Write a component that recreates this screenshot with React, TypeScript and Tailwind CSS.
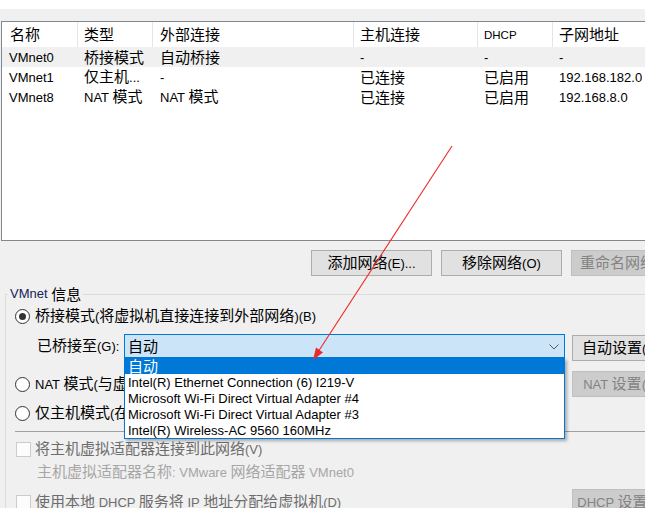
import React from "react";

const CJK_RE = /([\u2E80-\u9FFF\u3000-\u303F\uFF00-\uFFEF]+)/;

function M({ s }: { s: string }) {
  return (
    <span className="whitespace-pre">
      {s.split(CJK_RE).map((p, i) =>
        !p ? null : i % 2 === 1 ? (
          <span key={i} className="font-['Noto_Sans_CJK_SC',sans-serif] text-[15px]">
            {p}
          </span>
        ) : (
          <span key={i} className="text-[13px]">
            {p}
          </span>
        )
      )}
    </span>
  );
}

function Btn({ label, disabled, w }: { label: string; disabled?: boolean; w: string }) {
  const base = "h-[26px] shrink-0 flex items-center justify-center border whitespace-nowrap leading-[18px] ";
  const look = disabled
    ? "bg-[#cccccc] border-[#bfbfbf] text-[#838383]"
    : "bg-[#e1e1e1] border-[#adadad] text-black";
  return (
    <div className={base + look + " " + w}>
      <M s={label} />
    </div>
  );
}

function Radio({ checked }: { checked?: boolean }) {
  return (
    <div className="w-[15px] h-[15px] shrink-0 rounded-full border border-[#333333] bg-white flex items-center justify-center">
      {checked ? <div className="w-[7px] h-[7px] rounded-full bg-[#333333]" /> : null}
    </div>
  );
}

function Check() {
  return <div className="w-[15px] h-[15px] shrink-0 border border-[#cccccc] bg-[#fcfcfc]" />;
}

const cols = [
  "w-[76px] pl-[8px]",
  "w-[75px] pl-[6px]",
  "w-[201px] pl-[7px]",
  "w-[124px] pl-[6px]",
  "w-[75px] pl-[6px]",
  "w-[160px] pl-[6px]",
];

const rows = [
  ["VMnet0", "桥接模式", "自动桥接", "-", "-", "-"],
  ["VMnet1", "仅主机...", "-", "已连接", "已启用", "192.168.182.0"],
  ["VMnet8", "NAT 模式", "NAT 模式", "已连接", "已启用", "192.168.8.0"],
];

const items = [
  "自动",
  "Intel(R) Ethernet Connection (6) I219-V",
  "Microsoft Wi-Fi Direct Virtual Adapter #4",
  "Microsoft Wi-Fi Direct Virtual Adapter #3",
  "Intel(R) Wireless-AC 9560 160MHz",
];

export default function App() {
  return (
    <div className="relative w-[645px] h-[508px] overflow-hidden bg-[#f0f0f0] text-black font-['Liberation_Sans','Noto_Sans_CJK_SC',sans-serif] leading-[18px]">
      <div className="h-[9px] bg-white" />

      {/* list view */}
      <div className="mt-[12px] ml-[1px] w-[720px] h-[220px] border border-[#828790] bg-white">
        <div className="flex h-[25px]">
          {["名称", "类型", "外部连接", "主机连接", "DHCP", "子网地址"].map((h, i) => (
            <div
              key={i}
              className={
                "h-full flex items-center whitespace-nowrap border-r border-[#e5e5e5] " + cols[i]
              }
            >
              {h === "DHCP" ? <span className="text-[11.5px]">DHCP</span> : <M s={h} />}
            </div>
          ))}
        </div>
        {rows.map((r, ri) => (
          <div key={ri} className={"flex h-[20px] " + (ri === 0 ? "bg-[#f0f0f0]" : "")}>
            {r.map((c, ci) => (
              <div
                key={ci}
                className={
                  "h-full flex items-center whitespace-nowrap border-r border-transparent " +
                  cols[ci] +
                  (ci === 0 ? " !pl-[7px]" : "")
                }
              >
                <M s={c} />
              </div>
            ))}
          </div>
        ))}
      </div>

      {/* buttons */}
      <div className="mt-[9px] ml-[311px] flex gap-[9px]">
        <Btn label="添加网络(E)..." w="w-[121px]" />
        <Btn label="移除网络(O)" w="w-[121px]" />
        <Btn label="重命名网络(A)..." w="w-[121px]" disabled />
      </div>

      {/* group box */}
      <fieldset className="mt-[8px] ml-[5px] w-[700px] border border-[#dcdcdc] p-0 m-0 h-[300px]">
        <legend className="ml-[2px] px-[2px] h-[20px] flex items-center whitespace-pre">
          <span className="text-[13px] text-[#14235a]">VMnet </span>
          <span className="font-['Noto_Sans_CJK_SC',sans-serif] text-[15px]">信息</span>
        </legend>
        <div className="pl-[9px]">
          {/* radio 1 */}
          <div className="mt-[2px] h-[20px] flex items-center gap-[5px] whitespace-nowrap">
            <Radio checked />
            <M s="桥接模式(将虚拟机直接连接到外部网络)(B)" />
          </div>

          {/* bridged to */}
          <div className="mt-[8px] flex items-start">
            <div className="w-[557px] flex items-start">
              <div className="w-[109px] pl-[22px] h-[24px] flex items-center whitespace-nowrap">
                <M s="已桥接至(G):" />
              </div>
              <div className="relative w-[441px] h-[24px]">
                <div className="w-full h-full border border-[#0078d7] bg-[#cce4f7] flex items-center pl-[3px] pr-[5px]">
                  <div className="flex-1">
                    <M s="自动" />
                  </div>
                  <svg width="10" height="6" viewBox="0 0 10 6" className="mt-[1px]">
                    <polyline points="0.5,0.5 5,5 9.5,0.5" fill="none" stroke="#5a5a5a" strokeWidth="1" />
                  </svg>
                </div>
                <div className="absolute left-0 top-full z-10 w-full border-x border-b border-[#0078d7] bg-white shadow-[2px_2px_3px_rgba(0,0,0,0.3)]">
                  {items.map((it, i) => (
                    <div
                      key={i}
                      className={
                        "h-[16px] flex items-center pl-[3px] whitespace-nowrap " +
                        (i === 0 ? "bg-[#0078d7] text-white" : "text-black")
                      }
                    >
                      <M s={it} />
                    </div>
                  ))}
                </div>
              </div>
            </div>
            <div className="mt-[1px]">
              <Btn label="自动设置(U)..." w="w-[109px]" />
            </div>
          </div>

          {/* radio 2 */}
          <div className="mt-[10px] flex items-center h-[26px]">
            <div className="w-[557px] flex items-center gap-[5px] whitespace-nowrap">
              <Radio />
              <M s="NAT 模式(与虚拟机共享主机的 IP 地址)(N)" />
            </div>
            <Btn label="NAT 设置(S)..." w="w-[109px]" disabled />
          </div>

          {/* radio 3 */}
          <div className="mt-[6px] h-[20px] flex items-center gap-[5px] whitespace-nowrap">
            <Radio />
            <M s="仅主机模式(在专用网络内连接虚拟机)(H)" />
          </div>

          <div className="mt-[8px] h-px bg-[#a0a0a0]" />

          {/* checkbox 1 */}
          <div className="mt-[7px] h-[20px] flex items-center gap-[4px] whitespace-nowrap pl-[1px] text-[#6d6d6d]">
            <Check />
            <M s="将主机虚拟适配器连接到此网络(V)" />
          </div>

          <div className="mt-[3px] h-[20px] flex items-center pl-[22px] whitespace-nowrap text-[#a6a6a6]">
            <M s="主机虚拟适配器名称: VMware 网络适配器 VMnet0" />
          </div>

          {/* checkbox 2 */}
          <div className="mt-[7px] flex items-center h-[26px]">
            <div className="w-[557px] flex items-center gap-[4px] whitespace-nowrap pl-[1px] text-[#6d6d6d]">
              <Check />
              <M s="使用本地 DHCP 服务将 IP 地址分配给虚拟机(D)" />
            </div>
            <Btn label="DHCP 设置(P)..." w="w-[109px]" disabled />
          </div>
        </div>
      </fieldset>

      {/* red annotation arrow */}
      <svg
        className="absolute left-0 top-0 z-20 pointer-events-none"
        width="645"
        height="508"
        viewBox="0 0 645 508"
      >
        <line x1="452" y1="146" x2="318" y2="352" stroke="#f02828" strokeWidth="1.1" />
        <polygon points="313,360 323,352.5 316,347.5" fill="#f02828" />
      </svg>
    </div>
  );
}
